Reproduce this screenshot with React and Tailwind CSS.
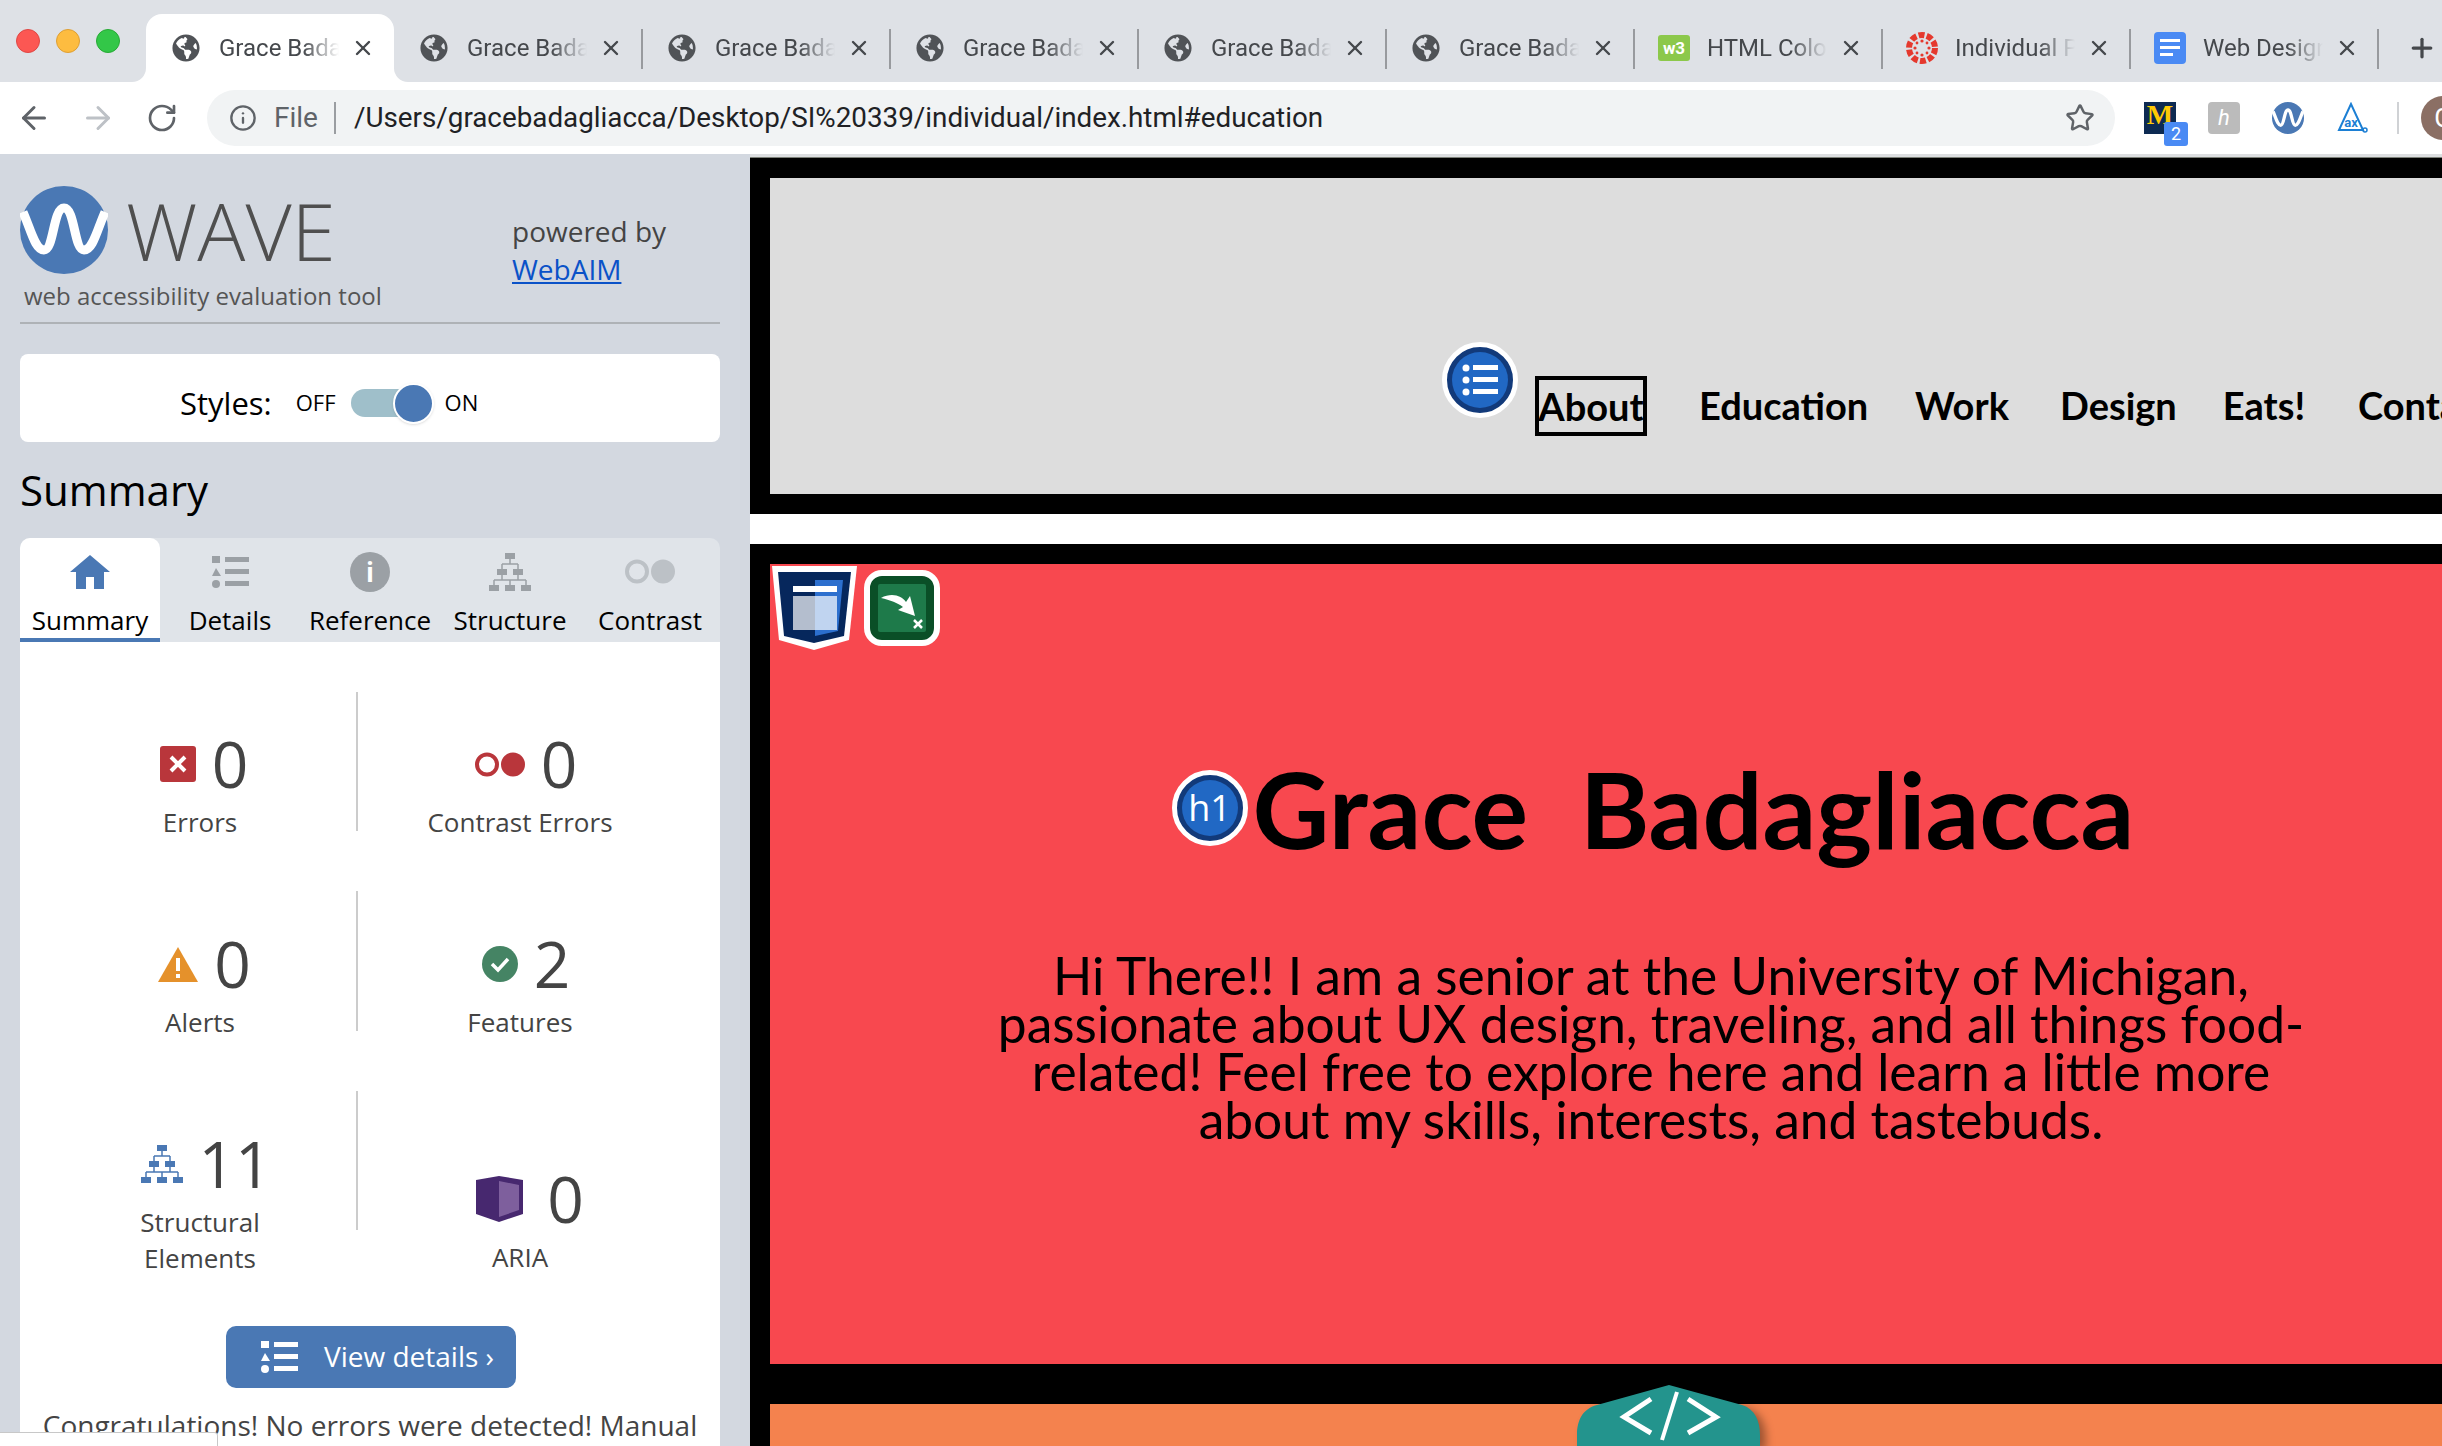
import React from "react";
import { ArrowLeft, ArrowRight, RotateCw, Info, Star, X, Plus } from "lucide-react";
import { FaGlobeAmericas } from "react-icons/fa";

const openSans = { fontFamily: '"Open Sans", sans-serif' };

const Wave = ({ className }) => (
  <svg viewBox="0 0 88 88" className={className}>
    <circle cx="44" cy="44" r="44" fill="#4a78b4" />
    <path d="M3 26C11 44 15 64 24 64C34 64 33 22 44 22C55 22 54 64 64 64C73 64 77 44 85 26" fill="none" stroke="#fff" strokeWidth="9" />
  </svg>
);

const Hierarchy = ({ className, color }) => (
  <svg viewBox="0 0 42 38" className={className} fill={color}>
    <rect x="16" y="0" width="10" height="6" />
    <rect x="8" y="16" width="10" height="6" />
    <rect x="24" y="16" width="10" height="6" />
    <rect x="0" y="32" width="10" height="6" />
    <rect x="16" y="32" width="10" height="6" />
    <rect x="32" y="32" width="10" height="6" />
    <path d="M21 6V11M13 11H29M13 11V16M29 11V16M13 22V27M29 22V27M5 27H37M5 27V32M21 27V32M37 27V32" fill="none" stroke={color} strokeWidth="1.5" />
  </svg>
);

const ListIcon = ({ className, color }) => (
  <svg viewBox="0 0 37 32" className={className} fill={color}>
    <rect x="0" y="0" width="8" height="7" />
    <path d="M4 12L9 20H0Z" />
    <circle cx="4" cy="28" r="4" />
    <rect x="13" y="1" width="24" height="5" />
    <rect x="13" y="13" width="24" height="5" />
    <rect x="13" y="25" width="24" height="5" />
  </svg>
);

const Dots = ({ className, color }) => (
  <svg viewBox="0 0 50 25" className={className}>
    <circle cx="12" cy="12.5" r="10" fill="none" stroke={color} strokeWidth="4" />
    <circle cx="38" cy="12.5" r="12" fill={color} />
  </svg>
);

const HomeIcon = () => (
  <svg viewBox="0 0 40 34" className="w-[40px] h-[34px]" fill="#4a78b4">
    <path d="M20 0L40 17H34V34H24V22H16V34H6V17H0Z" />
  </svg>
);

const CanvasIcon = () => (
  <svg viewBox="0 0 32 32" className="w-[32px] h-[32px]" fill="#e5392e">
    <circle cx="16" cy="16" r="13" fill="none" stroke="#e5392e" strokeWidth="6" strokeDasharray="6 2.2" />
    <circle cx="16" cy="9" r="1.6" />
    <circle cx="16" cy="23" r="1.6" />
    <circle cx="9" cy="16" r="1.6" />
    <circle cx="23" cy="16" r="1.6" />
    <circle cx="11" cy="11" r="1.4" />
    <circle cx="21" cy="11" r="1.4" />
    <circle cx="11" cy="21" r="1.4" />
    <circle cx="21" cy="21" r="1.4" />
  </svg>
);

const W3Icon = () => (
  <div className="w-[32px] h-[26px] rounded-[3px] bg-[#8cc84b] flex items-center justify-center text-white text-[17px] font-bold leading-none">w3</div>
);

const DocIcon = () => (
  <div className="w-[32px] h-[32px] rounded-[4px] bg-[#4a8af4] flex flex-col gap-[4px] pl-[6px] pt-[7px]">
    <div className="w-[20px] h-[3px] bg-white" />
    <div className="w-[20px] h-[3px] bg-white" />
    <div className="w-[13px] h-[3px] bg-white" />
  </div>
);

const Globe = () => <FaGlobeAmericas className="w-[28px] h-[28px] text-[#505357]" />;

const tabs = [
  { title: "Grace Badagliacca", icon: <Globe />, active: true },
  { title: "Grace Badagliacca", icon: <Globe /> },
  { title: "Grace Badagliacca", icon: <Globe /> },
  { title: "Grace Badagliacca", icon: <Globe /> },
  { title: "Grace Badagliacca", icon: <Globe /> },
  { title: "Grace Badagliacca", icon: <Globe /> },
  { title: "HTML Color Codes", icon: <W3Icon /> },
  { title: "Individual Portfolio", icon: <CanvasIcon /> },
  { title: "Web Design", icon: <DocIcon /> },
];

const ChromeTab = ({ title, icon, active }) => (
  <div className={`relative w-[248px] h-[68px] shrink-0 flex items-center ${active ? "bg-white rounded-t-[16px]" : ""}`}>
    {active && (
      <>
        <div className="absolute -left-[14px] bottom-0 w-[14px] h-[14px] bg-white">
          <div className="w-full h-full bg-[#dee1e6] rounded-br-[14px]" />
        </div>
        <div className="absolute -right-[14px] bottom-0 w-[14px] h-[14px] bg-white">
          <div className="w-full h-full bg-[#dee1e6] rounded-bl-[14px]" />
        </div>
      </>
    )}
    <div className="w-[80px] shrink-0 flex justify-center">{icon}</div>
    <div className="-ml-[7px] w-[120px] overflow-hidden whitespace-nowrap text-[24px] leading-[32px] text-[#45484c] [mask-image:linear-gradient(to_right,black_70%,transparent)]">
      {title}
    </div>
    <X className="ml-[12px] w-[24px] h-[24px] text-[#45484c]" strokeWidth={2.4} />
    {!active && <div className="absolute right-[-1px] top-[15px] w-[2px] h-[40px] bg-[#989a9e]" />}
  </div>
);

const Stat = ({ icon, value, label, shift = "", gap = "gap-[16px]", top = "" }) => (
  <div className={`flex flex-col items-center h-[200px] ${top}`}>
    <div className={`mt-[40px] h-[64px] flex items-center justify-center ${gap} ${shift}`}>
      {icon}
      <span className="text-[64px] leading-[64px] text-[#444]">{value}</span>
    </div>
    <div className="mt-[8px] text-[26px] leading-[36px] text-[#444] text-center">{label}</div>
  </div>
);

const panelTabs = [
  { label: "Summary", icon: <HomeIcon />, active: true },
  { label: "Details", icon: <ListIcon className="w-[37px] h-[32px]" color="#9ba0a5" /> },
  {
    label: "Reference",
    icon: (
      <div className="w-[40px] h-[40px] rounded-full bg-[#9ba0a5] flex items-center justify-center text-white text-[26px] font-bold leading-none">i</div>
    ),
  },
  { label: "Structure", icon: <Hierarchy className="w-[42px] h-[38px]" color="#9ba0a5" /> },
  { label: "Contrast", icon: <Dots className="w-[50px] h-[25px]" color="#bcc1c6" /> },
];

const Sidebar = () => (
  <aside style={openSans} className="relative w-[750px] h-full shrink-0 bg-[#d3d8e0] px-[30px] pl-[20px] overflow-hidden">
    {/* logo block */}
    <div className="h-[170px] border-b-2 border-[#aeb2b6] flex">
      <div className="w-[492px] pt-[32px]">
        <div className="flex items-center">
          <Wave className="w-[88px] h-[88px]" />
          <span className="ml-[18px] text-[80px] leading-[88px] font-light text-[#4f4f4f]">WAVE</span>
        </div>
        <div className="ml-[4px] mt-[6px] text-[24px] leading-[32px] text-[#555]">web accessibility evaluation tool</div>
      </div>
      <div className="pt-[58px] text-[28px] leading-[38px] text-[#444]">
        <div>powered by</div>
        <div className="text-[#0a52c8] underline">WebAIM</div>
      </div>
    </div>

    {/* styles toggle */}
    <div className="mt-[30px] h-[88px] bg-white rounded-[8px] flex items-center pl-[160px] pt-[9px] text-black">
      <span className="text-[31px] leading-[44px]">Styles:</span>
      <span className="ml-[24px] text-[22px]">OFF</span>
      <div className="relative ml-[15px] w-[69px] h-[28px] rounded-full bg-[#9fbfca]">
        <div className="absolute -right-[14px] -top-[6px] w-[41px] h-[41px] rounded-full bg-[#4a78b4] border-2 border-white shadow" />
      </div>
      <span className="ml-[25px] text-[22px]">ON</span>
    </div>

    <h2 className="h-[96px] flex items-center pb-[2px] text-[42px] text-black">Summary</h2>

    {/* panel tabs */}
    <div className="h-[104px] bg-[#e0e4e9] rounded-t-[10px] grid grid-cols-5">
      {panelTabs.map((t) => (
        <div
          key={t.label}
          className={`flex flex-col items-center text-[26px] text-black ${t.active ? "bg-white rounded-t-[10px] border-b-4 border-[#4a78b4]" : ""}`}
        >
          <div className="h-[67px] flex items-center justify-center">{t.icon}</div>
          <div className="leading-[30px] whitespace-nowrap">{t.label}</div>
        </div>
      ))}
    </div>

    {/* panel body */}
    <div className="bg-white h-[804px] pt-[50px]">
      <div className="relative ml-[20px] w-[640px] grid grid-cols-2">
        <div className="absolute left-[316px] top-0 w-[2px] h-[139px] bg-[#ccc]" />
        <div className="absolute left-[316px] top-[199px] w-[2px] h-[140px] bg-[#ccc]" />
        <div className="absolute left-[316px] top-[399px] w-[2px] h-[139px] bg-[#ccc]" />

        <Stat
          label="Errors"
          value="0"
          shift="pl-[8px]"
          icon={
            <svg viewBox="0 0 36 36" className="w-[36px] h-[36px]">
              <rect width="36" height="36" rx="3" fill="#b9363b" />
              <path d="M11 11L25 25M25 11L11 25" stroke="#fff" strokeWidth="4" />
            </svg>
          }
        />
        <Stat label="Contrast Errors" value="0" shift="pl-[12px]" icon={<Dots className="w-[50px] h-[25px]" color="#b9363b" />} />
        <Stat
          label="Alerts"
          value="0"
          shift="pl-[9px]"
          icon={
            <svg viewBox="0 0 40 35" className="w-[40px] h-[35px]">
              <path d="M20 0L40 35H0Z" fill="#e5912b" />
              <rect x="18" y="11" width="4" height="13" fill="#fff" />
              <rect x="18" y="27" width="4" height="4" fill="#fff" />
            </svg>
          }
        />
        <Stat
          label="Features"
          value="2"
          shift="pl-[12px]"
          icon={
            <svg viewBox="0 0 36 36" className="w-[36px] h-[36px]">
              <circle cx="18" cy="18" r="18" fill="#458464" />
              <path d="M10 18L16 24L26 13" fill="none" stroke="#fff" strokeWidth="3.5" />
            </svg>
          }
        />
        <Stat
          label={<>Structural<br />Elements</>}
          value="11"
          gap="gap-[15px]"
          shift="pl-[13px]"
          icon={<Hierarchy className="w-[42px] h-[38px]" color="#4a78b4" />}
        />
        <Stat
          label="ARIA"
          value="0"
          top="pt-[35px]"
          shift="pl-[20px]"
          gap="gap-[24px]"
          icon={
            <svg viewBox="0 0 47 46" className="w-[47px] h-[46px]">
              <path d="M0 4L23 0L47 4V38L23 46L0 38Z" fill="#47286f" />
              <path d="M23 5L43 9V34L23 41Z" fill="#7e5f9d" />
            </svg>
          }
        />
      </div>

      <div className="ml-[206px] mt-[34px] w-[290px] h-[62px] rounded-[10px] bg-[#4a78b4] flex items-center pl-[35px] text-white">
        <ListIcon className="w-[37px] h-[32px]" color="#fff" />
        <span className="ml-[26px] pb-[2px] text-[28px]">View details ›</span>
      </div>

      <div className="mt-[18px] text-center text-[28px] leading-[38px] text-[#444] whitespace-nowrap">
        Congratulations! No errors were detected! Manual
      </div>
    </div>

    {/* link status bubble */}
    <div className="absolute left-0 bottom-0 w-[218px] h-[14px] bg-white border-t border-r border-[#c8c8c8] rounded-tr-[4px]" />
  </aside>
);

const navItems = [
  { label: "Education", width: "w-[164px]" },
  { label: "Work", width: "w-[93px]" },
  { label: "Design", width: "w-[110px]" },
  { label: "Eats!", width: "w-[84px]" },
  { label: "Contact", width: "w-auto" },
];

const comic = { fontFamily: '"Comic Sans MS", Lato, sans-serif' };

const Badge = ({ className, children }) => (
  <div className={`rounded-full bg-[#123a7a] border-[5px] border-white flex items-center justify-center shrink-0 ${className}`}>
    {children}
  </div>
);

const Page = () => (
  <div style={comic} className="relative flex-1 h-full overflow-hidden bg-white">
    <div className="h-[3px] bg-[#dcdee0]" />
    <div className="h-[1px] bg-[#7c8078]" />
    <div className="w-[1802px]">
      {/* nav section */}
      <div className="h-[356px] border-[20px] border-black bg-[#dddddd] pl-[672px] pt-[164px] flex items-start">
        <Badge className="w-[76px] h-[76px]">
          <div className="w-[56px] h-[56px] rounded-full bg-[#2168c4] flex items-center justify-center">
            <svg viewBox="0 0 36 32" className="w-[36px] h-[32px]" fill="#fff">
              <circle cx="4" cy="4" r="3.5" />
              <circle cx="4" cy="16" r="3.5" />
              <circle cx="4" cy="28" r="3.5" />
              <rect x="11" y="1" width="25" height="5" />
              <rect x="11" y="13" width="25" height="5" />
              <rect x="11" y="25" width="25" height="5" />
            </svg>
          </div>
        </Badge>
        <div className="ml-[17px] mt-[34px] h-[60px] w-[112px] border-4 border-black flex items-center justify-center text-[38px] font-bold">About</div>
        {navItems.map((n) => (
          <div key={n.label} className={`ml-[52px] mt-[33px] shrink-0 text-[38px] leading-[60px] font-bold whitespace-nowrap text-center ${n.width}`}>{n.label}</div>
        ))}
      </div>

      {/* intro section */}
      <div className="mt-[30px] h-[840px] border-[20px] border-black bg-[#f8484f]">
        <div className="flex items-start pl-[2px] pt-[2px] h-[86px]">
          <svg viewBox="0 0 85 84" className="w-[85px] h-[84px]">
            <path d="M0 0H85L77 74L42 84L7 74Z" fill="#fff" />
            <path d="M6 6H79L72 70L42 77L12 70Z" fill="#06275c" />
            <path d="M43 14H71L66 65L43 70Z" fill="#2c6fce" />
            <rect x="21" y="30" width="44" height="34" fill="#fff" opacity="0.7" />
            <rect x="21" y="20" width="44" height="6" fill="#fff" />
          </svg>
          <div className="ml-[7px] mt-[4px] w-[76px] h-[76px] rounded-[18px] bg-[#0a4f27] border-[6px] border-white flex items-center justify-center">
            <svg viewBox="0 0 48 48" className="w-[48px] h-[48px]">
              <rect width="48" height="48" rx="2" fill="#1e7a4a" />
              <path d="M3 14C14 8 24 12 28 18L32 12L37 32L20 26L25 23C20 19 12 16 3 14Z" fill="#fff" />
              <path d="M36 36L44 44M44 36L36 44" stroke="#fff" strokeWidth="2.5" />
            </svg>
          </div>
        </div>

        <div className="mt-[108px] pl-[4px] flex items-center justify-center">
          <Badge className="w-[76px] h-[76px]">
            <div className="w-[56px] h-[56px] rounded-full bg-[#2168c4] flex items-center justify-center text-white text-[36px] font-normal" style={openSans}>h1</div>
          </Badge>
          <h1 className="ml-[5px] text-[106px] leading-[100px] font-bold text-black whitespace-nowrap">Grace&nbsp; Badagliacca</h1>
        </div>

        <p className="mt-[93px] text-center text-[51.5px] leading-[48px] text-black whitespace-nowrap">
          Hi There!! I am a senior at the University of Michigan,
          <br />
          passionate about UX design, traveling, and all things food-
          <br />
          related! Feel free to explore here and learn a little more
          <br />
          about my skills, interests, and tastebuds.
        </p>
      </div>

      {/* next section */}
      <div className="h-[200px] border-t-[20px] border-l-[20px] border-black bg-[#f4824e]" />
    </div>

    {/* code icon over the section edge */}
    <svg viewBox="0 0 183 61" className="absolute left-[827px] top-[1231px] w-[183px] h-[61px] drop-shadow-[6px_4px_4px_rgba(0,0,0,0.35)]">
      <path d="M92 0L165 20C178 24 183 36 183 50V61H0V50C0 36 5 24 20 20Z" fill="#23948d" />
      <path d="M74 14L47 32L74 48M111 14L139 32L111 48" fill="none" stroke="#fff" strokeWidth="5" />
      <path d="M100 7L85 55" stroke="#fff" strokeWidth="4" />
    </svg>
  </div>
);

const TopBar = () => (
  <>
    <div className="h-[82px] bg-[#dee1e6] flex items-start">
      <div className="w-[146px] shrink-0 pt-[29px] pl-[16px] flex gap-[16px]">
        <div className="w-[24px] h-[24px] rounded-full bg-[#fc5753] border border-[#df4744]" />
        <div className="w-[24px] h-[24px] rounded-full bg-[#fdbc40] border border-[#de9f34]" />
        <div className="w-[24px] h-[24px] rounded-full bg-[#33c748] border border-[#27aa35]" />
      </div>
      <div className="flex pt-[14px]">
        {tabs.map((t, i) => (
          <ChromeTab key={i} {...t} />
        ))}
      </div>
      <Plus className="ml-[29px] mt-[33px] w-[30px] h-[30px] text-[#45484c]" strokeWidth={2.6} />
    </div>

    <div className="h-[72px] bg-white flex items-center overflow-hidden">
      <ArrowLeft className="ml-[16px] w-[36px] h-[36px] shrink-0 text-[#5f6368]" strokeWidth={2} />
      <ArrowRight className="ml-[28px] w-[36px] h-[36px] shrink-0 text-[#bdc1c6]" strokeWidth={2} />
      <RotateCw className="ml-[30px] w-[32px] h-[32px] shrink-0 text-[#5f6368]" strokeWidth={2} />
      <div className="ml-[29px] w-[1908px] h-[56px] shrink-0 rounded-full bg-[#f1f3f4] flex items-center pl-[22px]">
        <Info className="w-[28px] h-[28px] text-[#5f6368]" strokeWidth={2} />
        <span className="ml-[17px] text-[28px] text-[#5f6368]">File</span>
        <div className="ml-[16px] w-[2px] h-[32px] bg-[#9a9da1]" />
        <span className="ml-[18px] text-[27.8px] text-[#202124] whitespace-nowrap">/Users/gracebadagliacca/Desktop/SI%20339/individual/index.html#education</span>
        <Star className="ml-auto mr-[20px] w-[30px] h-[30px] text-[#5f6368]" strokeWidth={2} />
      </div>
      <div className="relative ml-[29px] w-[32px] h-[32px] shrink-0 bg-[#0d2a52] flex items-start justify-center text-[#ffcb05] text-[28px] font-bold leading-[26px]" style={{ fontFamily: '"Liberation Serif", serif' }}>
        M
        <div className="absolute left-[20px] top-[20px] w-[24px] h-[24px] rounded-[3px] bg-[#4a8af4] text-white text-[18px] font-normal leading-[24px] text-center" style={{ fontFamily: "Roboto, sans-serif" }}>2</div>
      </div>
      <div className="ml-[32px] w-[32px] h-[32px] shrink-0 rounded-[4px] bg-[#bbb] flex items-center justify-center text-white text-[22px] italic leading-none">h</div>
      <Wave className="ml-[31px] w-[34px] h-[32px] shrink-0" />
      <svg viewBox="0 0 32 32" className="ml-[31px] w-[32px] h-[32px] shrink-0">
        <path d="M15 2L3 28H27L15 2Z" fill="none" stroke="#1c7fd4" strokeWidth="2" />
        <circle cx="29" cy="28" r="2" fill="none" stroke="#1c7fd4" strokeWidth="1.5" />
        <text x="15" y="25" textAnchor="middle" fontSize="13" fontWeight="700" fill="#1c7fd4">ax</text>
      </svg>
      <div className="ml-[29px] w-[2px] h-[32px] shrink-0 bg-[#d0d2d5]" />
      <div className="ml-[22px] w-[44px] h-[44px] shrink-0 rounded-full bg-[#8b6f64] text-white text-[26px] flex items-center justify-center">G</div>
    </div>
  </>
);

export default function App() {
  return (
    <div className="w-[2442px] h-[1446px] overflow-hidden flex flex-col" style={{ fontFamily: "Roboto, sans-serif" }}>
      <TopBar />
      <main className="flex h-[1292px]">
        <Sidebar />
        <Page />
      </main>
    </div>
  );
}
